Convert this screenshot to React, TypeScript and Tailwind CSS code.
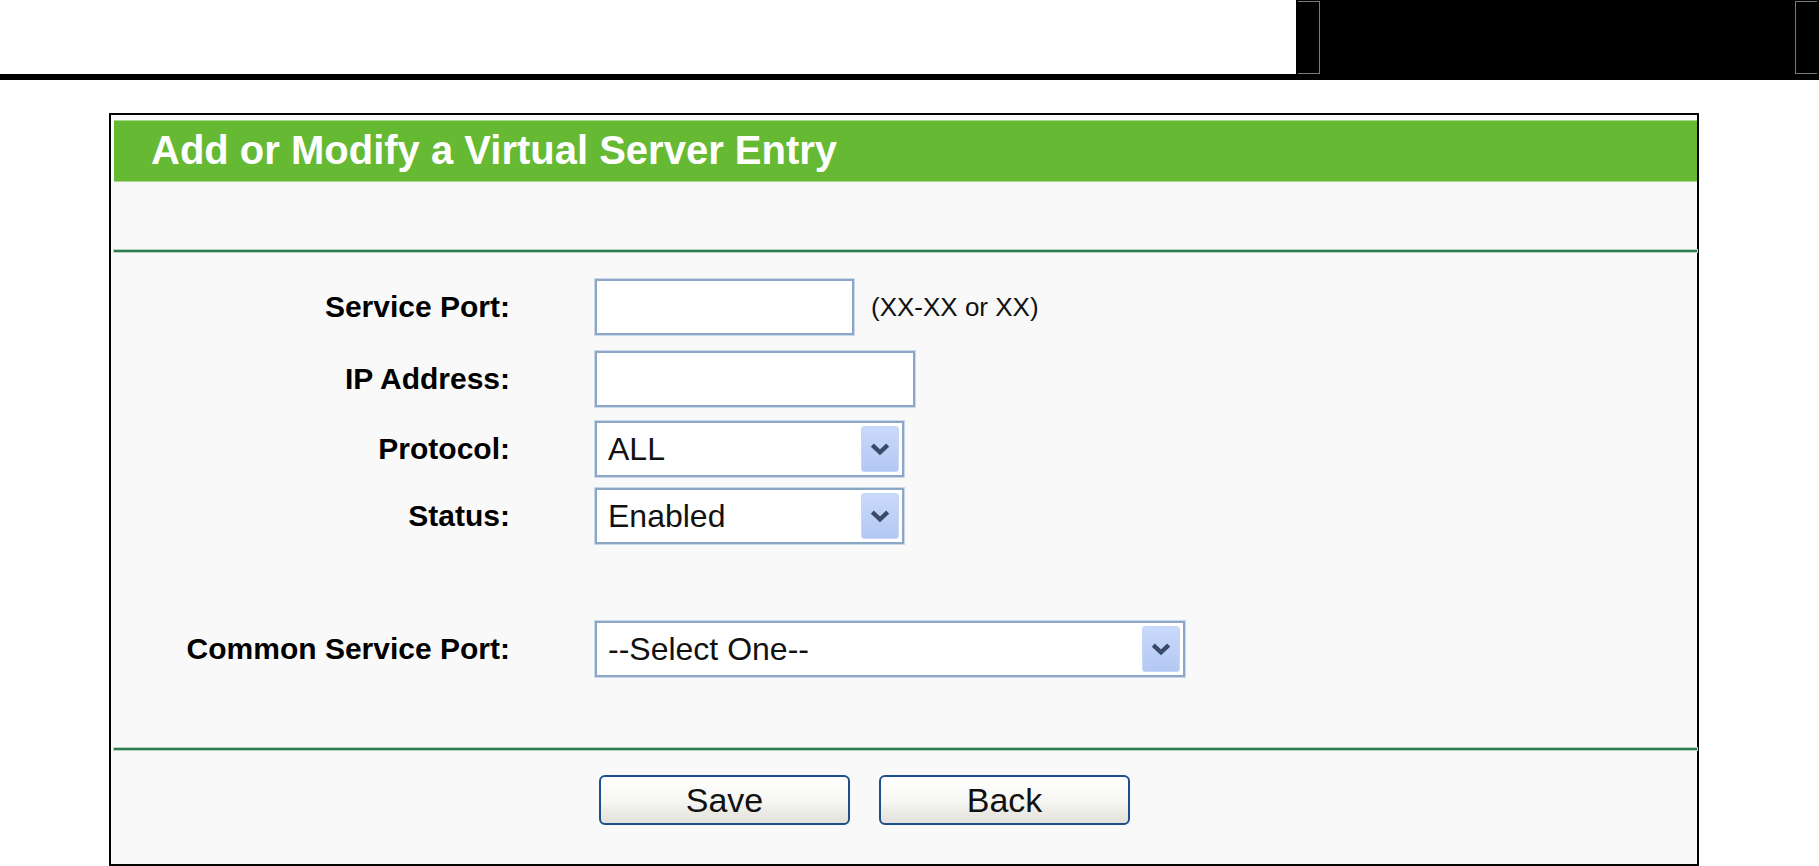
import React from 'react';

function Chevron() {
    return (
        <svg viewBox="0 0 20 12" className="w-[22px] h-[14px]">
            <path d="M3 2.5 L10 9 L17 2.5" fill="none" stroke="#3b4a68" strokeWidth="4" strokeLinejoin="miter" />
        </svg>
    );
}

function Select({ value, width }: { value: string; width: string }) {
    return (
        <div
            className={`${width} h-[56px] bg-white border-2 border-[#8ba6c6] shadow-[0_0_0_1px_#c9d7e8] flex items-center justify-between pl-[11px] pr-[3px] py-[3px]`}
        >
            <span className="text-[32px] leading-none text-[#111]">{value}</span>
            <div className="w-[38px] h-full rounded-[3px] border border-[#c6d6f6] bg-linear-to-b from-[#c9d9fb] to-[#b3c8f3] flex items-center justify-center">
                <Chevron />
            </div>
        </div>
    );
}

function TextInput({ width }: { width: string }) {
    return <div className={`${width} h-[56px] bg-white border-2 border-[#8ba6c6] shadow-[0_0_0_1px_#c9d7e8]`} />;
}

function Row({ label, children, className }: { label: string; children: React.ReactNode; className: string }) {
    return (
        <div className={`flex items-center ${className}`}>
            <div className="w-[396px] text-right font-bold text-[30px] leading-none text-black">{label}</div>
            <div className="ml-[85px] flex items-center">{children}</div>
        </div>
    );
}

function Divider() {
    return <div className="h-[2px] bg-[#2f7a4c] shadow-[0_0_0_1px_#b3d6bf]" />;
}

export default function App() {
    return (
        <div className="w-[1819px] h-[866px] bg-white overflow-hidden font-['Liberation_Sans',Arial,sans-serif]">
            {/* Top strip */}
            <div className="flex h-[74px]">
                <div className="flex-1" />
                <div className="w-[523px] bg-black flex justify-between items-start pt-[1px] px-[2px]">
                    <div className="w-[22px] h-[73px] border-t border-b border-r border-[#7a7a7a]" />
                    <div className="w-[22px] h-[73px] border-t border-b border-l border-[#7a7a7a]" />
                </div>
            </div>
            <div className="h-[6px] bg-black" />

            {/* Panel */}
            <div className="mt-[33px] ml-[109px] w-[1590px] h-[753px] border-2 border-black bg-[#f9f9f9] pl-[3px] pt-[5px]">
                <div className="h-[62px] bg-[#66b933] border-t border-b border-[#a9d78c] flex items-center pl-[37px] pb-[3px]">
                    <h1 className="text-white font-bold text-[40px] leading-none">Add or Modify a Virtual Server Entry</h1>
                </div>

                <div className="h-[68px]" />
                <Divider />

                <Row label="Service Port:" className="mt-[27px]">
                    <TextInput width="w-[259px]" />
                    <span className="ml-[17px] text-[26px] text-[#111] leading-none">(XX-XX or XX)</span>
                </Row>
                <Row label="IP Address:" className="mt-[16px]">
                    <TextInput width="w-[320px]" />
                </Row>
                <Row label="Protocol:" className="mt-[14px]">
                    <Select value="ALL" width="w-[309px]" />
                </Row>
                <Row label="Status:" className="mt-[11px]">
                    <Select value="Enabled" width="w-[309px]" />
                </Row>
                <Row label="Common Service Port:" className="mt-[77px]">
                    <Select value="--Select One--" width="w-[590px]" />
                </Row>

                <div className="mt-[71px]">
                    <Divider />
                </div>

                <div className="flex gap-[29px] pl-[485px] mt-[25px]">
                    {['Save', 'Back'].map((t) => (
                        <button
                            key={t}
                            className="w-[251px] h-[50px] rounded-[6px] border-2 border-[#1f4e8c] bg-linear-to-b from-white via-[#f7f7f4] to-[#e2e1da] text-[34px] leading-none text-[#111]"
                        >
                            {t}
                        </button>
                    ))}
                </div>
            </div>
        </div>
    );
}
